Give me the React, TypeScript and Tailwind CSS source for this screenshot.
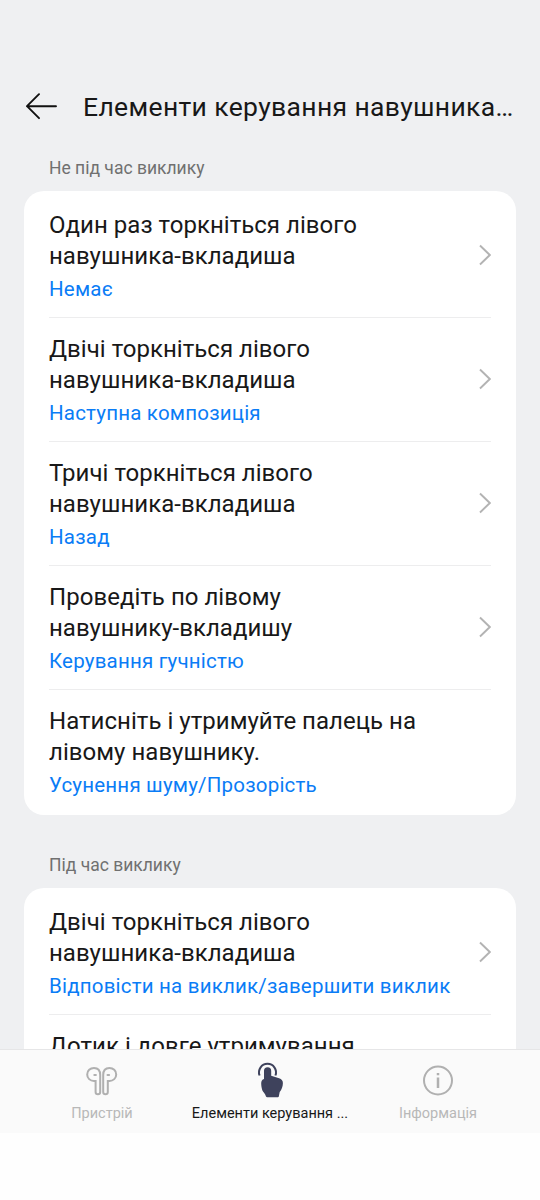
import React from 'react';

type Control = {
  title: string[];
  value?: string;
  arrow?: boolean;
};

const idleControls: Control[] = [
  { title: ['Один раз торкніться лівого', 'навушника-вкладиша'], value: 'Немає', arrow: true },
  { title: ['Двічі торкніться лівого', 'навушника-вкладиша'], value: 'Наступна композиція', arrow: true },
  { title: ['Тричі торкніться лівого', 'навушника-вкладиша'], value: 'Назад', arrow: true },
  { title: ['Проведіть по лівому', 'навушнику-вкладишу'], value: 'Керування гучністю', arrow: true },
  { title: ['Натисніть і утримуйте палець на', 'лівому навушнику.'], value: 'Усунення шуму/Прозорість' },
];

const callControls: Control[] = [
  {
    title: ['Двічі торкніться лівого', 'навушника-вкладиша'],
    value: 'Відповісти на виклик/завершити виклик',
    arrow: true,
  },
  { title: ['Дотик і довге утримування'] },
];

function BackIcon() {
  return (
    <svg width="32" height="28" viewBox="0 0 32 28" fill="none" stroke="#111" strokeWidth="1.9" strokeLinecap="round" strokeLinejoin="round">
      <path d="M14 1.2 2 13.2 14 25.2M2 13.2h29" />
    </svg>
  );
}

function ChevronIcon() {
  return (
    <svg width="12" height="22" viewBox="0 0 12 22" fill="none" stroke="#b3b3b3" strokeWidth="1.9" className="shrink-0">
      <path d="M1 1.5 10.8 11 1 20.5" />
    </svg>
  );
}

function EarbudsIcon() {
  return (
    <svg width="32" height="30" viewBox="0 0 32 30" fill="none" stroke="#b0b0b0" strokeWidth="2" strokeLinecap="round">
      <path d="M14.2 9C14.2 4.600 11.800 2 8 2 4.100 2 1.200 4.700 1.200 8.400c0 3.800 2.900 6.600 6.800 6.600h1.600v11a2.300 2.300 0 0 0 4.600 0z" />
      <path d="M17.200 9c0-4.400 2.400-7 6.200-7 3.900 0 6.800 2.700 6.800 6.400 0 3.800-2.900 6.600-6.800 6.600h-1.600v11a2.300 2.300 0 0 1-4.600 0z" />
      <path d="M8.300 9h1.600M21.500 9h1.600" />
    </svg>
  );
}

function TouchIcon() {
  return (
    <svg width="28" height="36" viewBox="0 0 28 36" fill="none">
      <path d="M3.600 13.500A8.500 8.500 0 1 1 19.400 13.500" stroke="#3e425c" strokeWidth="2" />
      <path
        d="M8 8.900a3.600 3.600 0 0 1 7.200 0v4.800l7.900 2.500c2.600.8 3.900 2.500 3.800 5.100-.1 3.600-1.300 6.400-3.200 8.800l-.9 4.500c-.1.400-.4.600-.9.600H11.200c-.6 0-1-.3-1.200-.8C9.200 31.500 7.200 30.300 6.400 28.500 5.700 26.500 5.200 24 5.200 21.300c0-2.200 1-3.600 2.800-4.200z"
        fill="#3e425c"
      />
    </svg>
  );
}

function InfoIcon() {
  return (
    <svg width="32" height="32" viewBox="0 0 32 32" fill="none" stroke="#b0b0b0">
      <circle cx="16" cy="15.5" r="14" strokeWidth="2" />
      <path d="M16 12.400v10.600M16 8v2.300" strokeWidth="2.500" />
    </svg>
  );
}

function ControlCard({ items }: { items: Control[] }) {
  return (
    <div className="mx-6 rounded-[20px] bg-white px-[25px] pt-[3px] pb-px">
      {items.map((item, index) => (
        <div
          key={index}
          className={`flex h-[124px] justify-between ${
            index < items.length - 1 ? 'border-b border-[#ededee]' : ''
          }`}
        >
          <div className="pt-4">
            <p className="text-[24px] leading-[31px] tracking-[0.03px] whitespace-nowrap text-[#181818]">
              {item.title.map((line) => (
                <span key={line} className="block">
                  {line}
                </span>
              ))}
            </p>
            {item.value && (
              <p className="mt-px text-[20.5px] leading-8 tracking-[0.2px] whitespace-nowrap text-[#0a7cf6]">{item.value}</p>
            )}
          </div>
          {item.arrow && (
            <div className="pt-[50px]">
              <ChevronIcon />
            </div>
          )}
        </div>
      ))}
    </div>
  );
}

export default function App() {
  return (
    <div className="flex h-[1200px] w-[540px] flex-col overflow-hidden bg-[#eff0f2] font-['Roboto','Noto_Sans',sans-serif]">
      <header className="flex shrink-0 items-center gap-[26px] pt-[87px] pb-px pl-[25px]">
        <BackIcon />
        <h1 className="text-[26.5px] leading-[39px] tracking-[0.35px] whitespace-nowrap text-[#181818]">
          Елементи керування навушника…
        </h1>
      </header>
      <main className="min-h-0 flex-1 overflow-hidden">
        <h2 className="h-16 px-[49px] pt-[27px] text-[17.5px] leading-7 text-[#707070]">Не під час виклику</h2>
        <div className="h-[624px]">
          <ControlCard items={idleControls} />
        </div>
        <h2 className="h-[73px] px-[49px] pt-9 text-[17.5px] leading-7 text-[#707070]">Під час виклику</h2>
        <ControlCard items={callControls} />
      </main>
      <nav className="grid h-[84px] shrink-0 grid-cols-[34px_136px_200px_136px_34px] border-t border-[#e6e6e7] bg-[#fafafa] text-[14.5px]">
        <div className="col-start-2 flex flex-col items-center pt-4 text-[#b8b8b8]">
          <EarbudsIcon />
          <span className="mt-2 leading-5">Пристрій</span>
        </div>
        <div className="flex flex-col items-center pt-3 text-[#181818]">
          <TouchIcon />
          <span className="mt-1.5 leading-5 whitespace-nowrap">Елементи керування ...</span>
        </div>
        <div className="flex flex-col items-center pt-[15px] text-[#b8b8b8]">
          <InfoIcon />
          <span className="mt-[7px] leading-5">Інформація</span>
        </div>
      </nav>
      <div className="h-[67px] shrink-0 bg-[#fefefe]" />
    </div>
  );
}
